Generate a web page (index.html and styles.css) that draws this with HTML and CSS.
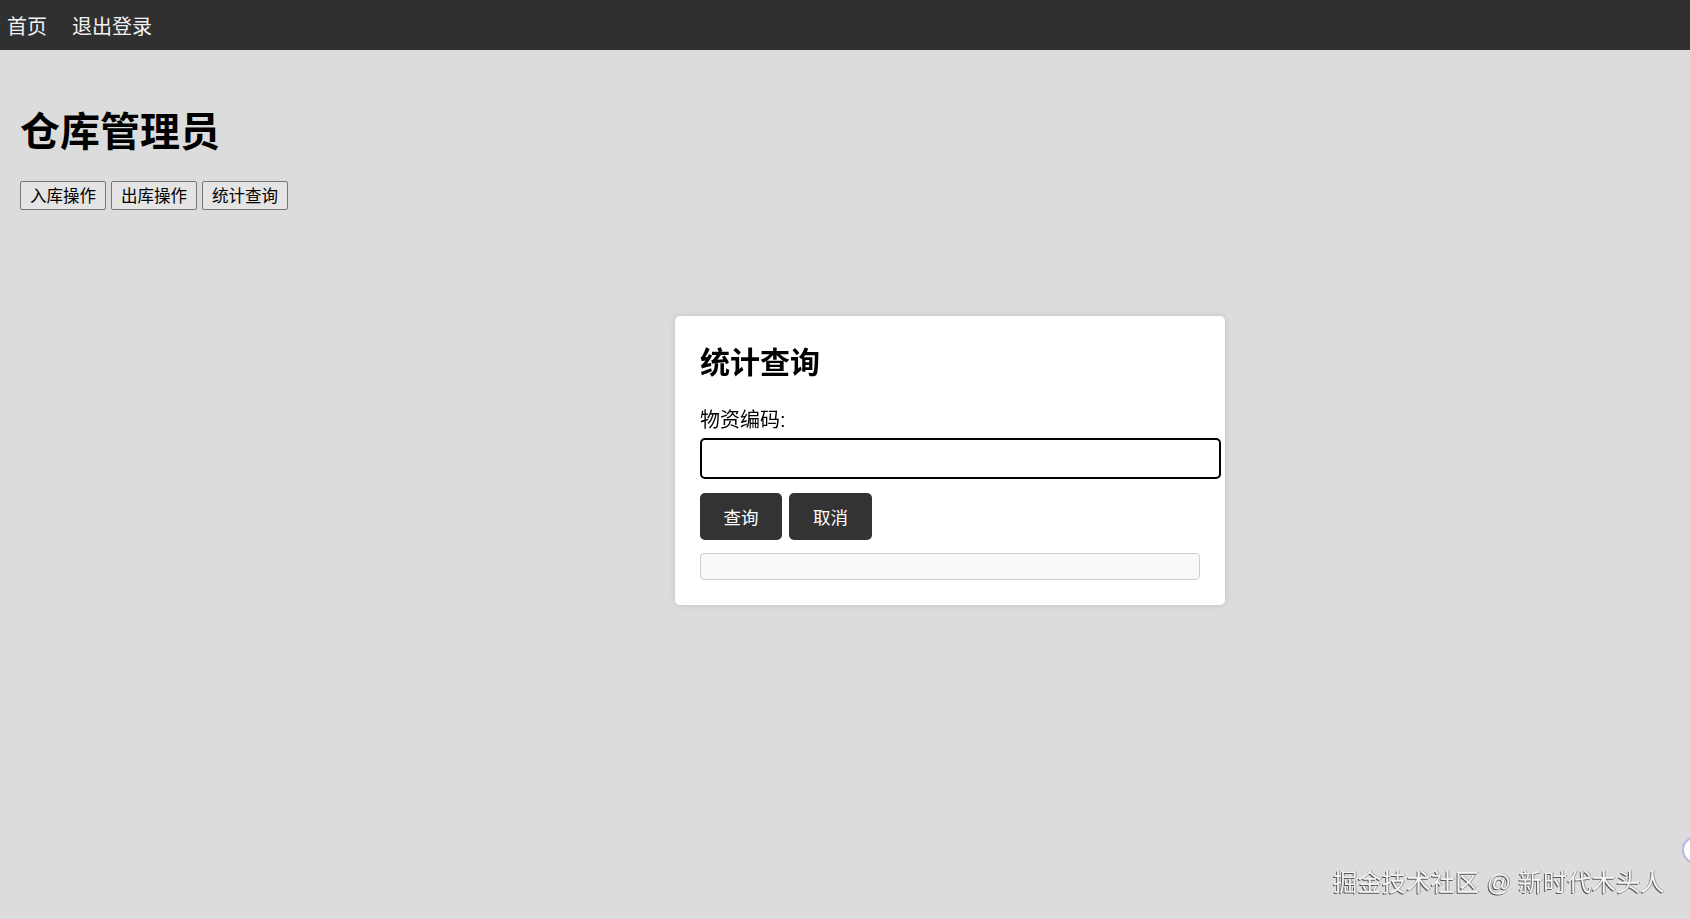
FILE: index.html
```html
<!DOCTYPE html>
<html>

<head>
  <title>仓库管理员</title>
  <link rel="stylesheet" href="styles.css">
</head>

<body>
  <!-- 顶部导航 -->
  <div class="navbar">
    <a href="#">首页</a>
    <a href="#">退出登录</a>
  </div>

  <div class="container">
    <h1>仓库管理员</h1>
    <div class="actions">
      <button>入库操作</button>
      <button>出库操作</button>
      <button>统计查询</button>
    </div>
  </div>

  <!-- 统计查询弹窗 -->
  <div class="modal">
    <h2>统计查询</h2>
    <label for="code">物资编码:</label>
    <input type="text" id="code">
    <div class="modal-buttons">
      <button class="btn">查询</button>
      <button class="btn">取消</button>
    </div>
    <div class="result"></div>
  </div>

  <div class="watermark">掘金技术社区 @ 新时代木头人</div>
  <div class="float-dot"></div>
</body>

</html>
```

FILE: styles.css
```css
* {
  margin: 0;
  padding: 0;
  box-sizing: border-box;
}

body {
  font-family: "Liberation Sans", "Noto Sans CJK SC", sans-serif;
  background-color: #dcdcdc;
  color: #000;
  min-height: 919px;
  overflow: hidden;
}

.navbar {
  height: 50px;
  background-color: #303030;
  display: flex;
  align-items: center;
  padding-left: 7px;
  gap: 25px;
}

.navbar a {
  color: #f2f2f2;
  font-size: 20px;
  text-decoration: none;
}

.container {
  padding: 0 20px;
}

h1 {
  font-size: 40px;
  font-weight: bold;
  line-height: 54px;
  margin-top: 55px;
}

.actions {
  display: flex;
  gap: 5px;
  margin-top: 22px;
}

.actions button {
  font-family: "Noto Sans CJK SC", sans-serif;
  font-size: 16.5px;
  line-height: 23px;
  padding: 2px 9px;
  background-color: #e4e4e4;
  border: 1px solid #767676;
  border-radius: 2px;
  color: #000;
}

/* 弹窗 */
.modal {
  position: fixed;
  left: 675px;
  top: 316px;
  width: 550px;
  background-color: #fff;
  border-radius: 5px;
  box-shadow: 0 0 6px rgba(0, 0, 0, 0.12);
  padding: 29px 25px 25px;
  display: flex;
  flex-direction: column;
}

.modal h2 {
  font-size: 30px;
  line-height: 36px;
  font-weight: bold;
  margin-bottom: 27px;
}

.modal label {
  font-size: 20px;
  line-height: 24px;
  margin-bottom: 6px;
}

.modal input {
  width: 521px;
  height: 41px;
  border: 2px solid #000;
  border-radius: 5px;
  outline: none;
  font-size: 18px;
  padding: 0 10px;
}

.modal-buttons {
  display: flex;
  gap: 7px;
  margin-top: 14px;
}

.btn {
  font-family: "Noto Sans CJK SC", sans-serif;
  width: 82px;
  height: 47px;
  font-size: 17.5px;
  color: #fff;
  background-color: #333;
  border: none;
  border-radius: 5px;
}

.btn + .btn {
  width: 83px;
}

.result {
  margin-top: 13px;
  width: 500px;
  height: 27px;
  background-color: #f9f9f9;
  border: 1px solid #ccc;
  border-radius: 4px;
}

.watermark {
  position: fixed;
  right: 25px;
  bottom: 21px;
  font-size: 24px;
  color: #f6f6f6;
  text-shadow: -1px 1px 0 #555, 1px 0 0 #999;
  letter-spacing: 0.4px;
}

.float-dot {
  position: fixed;
  right: -20px;
  top: 836px;
  width: 28px;
  height: 28px;
  border-radius: 50%;
  border: 2px solid #b9b6e6;
  background-color: #fff;
}
```
